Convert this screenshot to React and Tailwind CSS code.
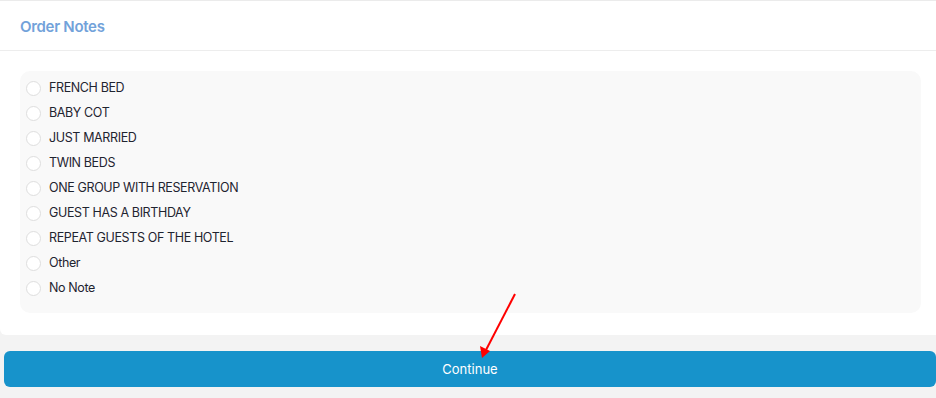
export default function App() {
  const items = [
    "FRENCH BED",
    "BABY COT",
    "JUST MARRIED",
    "TWIN BEDS",
    "ONE GROUP WITH RESERVATION",
    "GUEST HAS A BIRTHDAY",
    "REPEAT GUESTS OF THE HOTEL",
    "Other",
    "No Note",
  ];
  return (
    <div className="relative w-[936px] h-[398px] bg-[#f3f3f3] overflow-hidden" style={{ fontFamily: "Inter, 'Noto Sans', sans-serif" }}>
      <div className="bg-white border-t border-[#ebebeb] rounded-bl-md h-[335px]">
        <div className="h-[50px] border-b border-[#ededed] flex items-center px-5 pt-[3px]">
          <span className="text-[15px] font-semibold text-[#72a2da] tracking-[-0.02em]">Order Notes</span>
        </div>
        <div className="pt-5 pl-5 pr-[15px]">
          <div className="bg-[#f9f9f9] rounded-[10px] h-[242px] pt-[5px] pl-[6px]">
            {items.map((t) => (
              <label key={t} className="flex items-center h-[25px] gap-2">
                <span className="w-[15px] h-[15px] rounded-full border border-[#dedede] bg-white shrink-0" />
                <span className="text-[12.5px] text-[#1f2430] tracking-[-0.03em] leading-none">{t}</span>
              </label>
            ))}
          </div>
        </div>
      </div>
      <button className="mt-4 ml-1 w-[932px] h-9 pt-[2px] rounded-md bg-[#1793cb] text-white text-[13px] flex items-center justify-center">
        Continue
      </button>
      <svg className="absolute left-0 top-0 pointer-events-none" width="936" height="398">
        <line x1="515" y1="294" x2="486" y2="350" stroke="#ff0000" strokeWidth="2" />
        <polygon points="482,358 480,346 490,351" fill="#ff0000" />
      </svg>
    </div>
  );
}
